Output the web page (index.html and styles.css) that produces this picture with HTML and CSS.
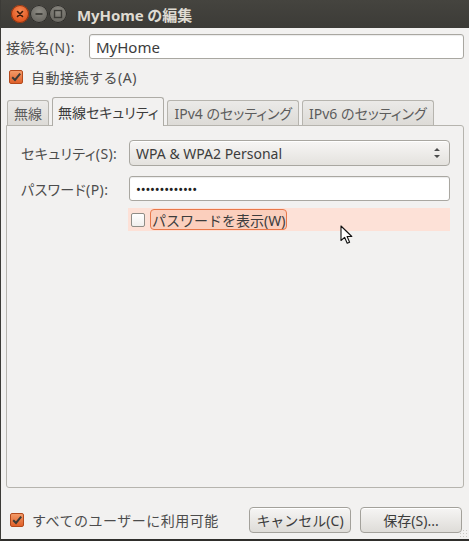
FILE: index.html
```html
<!DOCTYPE html>
<html lang="ja">
<head>
<meta charset="utf-8">
<title>MyHome の編集</title>
<link rel="stylesheet" href="styles.css">
</head>
<body>
<div class="window">
  <div class="titlebar">
    <div class="wm-buttons">
      <span class="wm-btn wm-close">
        <svg viewBox="0 0 18 18" width="18" height="18"><path d="M6.5 6.5 L11.5 11.5 M11.5 6.5 L6.5 11.5" stroke="#3a1a0a" stroke-width="1.6" stroke-linecap="round"/></svg>
      </span>
      <span class="wm-btn wm-min">
        <svg viewBox="0 0 18 18" width="18" height="18"><path d="M5.5 9 H12.5" stroke="#3b3a36" stroke-width="1.8"/></svg>
      </span>
      <span class="wm-btn wm-max">
        <svg viewBox="0 0 18 18" width="18" height="18"><rect x="5.5" y="5.5" width="7" height="7" fill="none" stroke="#3b3a36" stroke-width="1.4"/></svg>
      </span>
    </div>
    <div class="title">MyHome の編集</div>
  </div>

  <div class="content">
    <div class="row name-row">
      <label class="name-label">接続名(N):</label>
      <div class="entry name-entry">MyHome</div>
    </div>

    <div class="check-row auto-row">
      <span class="check checked">
        <svg viewBox="0 0 14 14" width="14" height="14"><path d="M3.2 7.2 L6 10 L11.2 3.6" fill="none" stroke="#3c3b37" stroke-width="2"/></svg>
      </span>
      <span class="check-text">自動接続する(A)</span>
    </div>

    <div class="tabs">
      <div class="tab">無線</div>
      <div class="tab active">無線セキュリティ</div>
      <div class="tab">IPv4 のセッティング</div>
      <div class="tab">IPv6 のセッティング</div>
    </div>

    <div class="panel">
      <div class="form-row">
        <span class="form-label">セキュリティ(S):</span>
        <div class="combo">
          <span>WPA &amp; WPA2 Personal</span>
          <svg class="combo-arrows" viewBox="0 0 8 14" width="8" height="14"><path d="M1 5 L4 2 L7 5 Z M1 9 L4 12 L7 9 Z" fill="#4c4c4c"/></svg>
        </div>
      </div>
      <div class="form-row pw-row">
        <span class="form-label">パスワード(P):</span>
        <div class="entry pw-entry">•••••••••••••</div>
      </div>
      <div class="show-row">
        <span class="check"></span>
        <span class="focus-label">パスワードを表示(W)</span>
      </div>
    </div>

    <div class="footer">
      <div class="check-row all-row">
        <span class="check checked">
          <svg viewBox="0 0 14 14" width="14" height="14"><path d="M3.2 7.2 L6 10 L11.2 3.6" fill="none" stroke="#3c3b37" stroke-width="2"/></svg>
        </span>
        <span class="check-text">すべてのユーザーに利用可能</span>
      </div>
      <div class="buttons">
        <button class="btn">キャンセル(C)</button>
        <button class="btn">保存(S)...</button>
      </div>
    </div>
  </div>

  <svg class="pointer" viewBox="0 0 13 20" width="13" height="20">
    <path d="M1 1 L1 15.5 L4.6 12.3 L7.2 18.3 L9.6 17.3 L7.1 11.5 L11.8 11.5 Z" fill="#fff" stroke="#111" stroke-width="1.1" stroke-linejoin="round"/>
  </svg>
  <div class="grip"></div>
</div>
</body>
</html>
```

FILE: styles.css
```css
* { box-sizing: border-box; }

html, body {
  margin: 0;
  padding: 0;
  background: #3c3b37;
}

body {
  font-family: "Noto Sans", "Noto Sans CJK JP", sans-serif;
  font-size: 14px;
  color: #3c3c3c;
}

.window {
  position: relative;
  width: 469px;
  height: 541px;
  background: #f2f1f0;
  border-left: 1px solid #3c3b37;
  border-bottom: 2px solid #2f2e2b;
  display: flex;
  flex-direction: column;
  overflow: hidden;
}

/* title bar */
.titlebar {
  height: 28px;
  flex: none;
  background: linear-gradient(#45443f, #3c3b37);
  display: flex;
  align-items: center;
}

.wm-buttons {
  display: flex;
  gap: 1px;
  margin-left: 10px;
}

.wm-btn {
  width: 18px;
  height: 18px;
  border-radius: 50%;
  display: block;
}
.wm-btn svg { display: block; }

.wm-close {
  background: radial-gradient(circle at 50% 35%, #f58a55, #e0561f 70%);
  box-shadow: inset 0 0 0 1px #8a3412;
}
.wm-min, .wm-max {
  background: radial-gradient(circle at 50% 35%, #8d8b84, #6a6862 70%);
  box-shadow: inset 0 0 0 1px #2c2b28;
}

.title {
  margin-left: 10px;
  color: #dfdbd2;
  font-weight: bold;
  font-size: 15px;
  letter-spacing: -0.1px;
}

/* dialog body */
.content {
  flex: 1;
  display: flex;
  flex-direction: column;
  padding: 6px 5px 0 5px;
}

.row {
  display: flex;
  align-items: center;
}

.name-label {
  width: 83px;
  flex: none;
  color: #4c4c4c;
  letter-spacing: 0.6px;
}

.entry {
  background: #fff;
  border: 1px solid #a9a7a1;
  border-radius: 3px;
  box-shadow: inset 0 1px 1px rgba(0,0,0,0.08);
  height: 25px;
  display: flex;
  align-items: center;
  padding-left: 6px;
  color: #3c3c3c;
}

.name-entry {
  flex: 1;
  font-size: 15px;
}

.check-row {
  display: flex;
  align-items: center;
}

.check {
  width: 14px;
  height: 14px;
  flex: none;
  border-radius: 2px;
  border: 1px solid #9d9b95;
  background: linear-gradient(#ffffff, #f0efed);
  position: relative;
}
.check.checked {
  border-color: #b44a1c;
  background: linear-gradient(#f39a67, #e0602a);
}
.check svg {
  position: absolute;
  left: -1px;
  top: -1px;
}

.check-text {
  margin-left: 8px;
  color: #4c4c4c;
  letter-spacing: 0.5px;
}

.auto-row {
  margin-top: 11px;
  padding-left: 3px;
  height: 14px;
}

/* notebook tabs */
.tabs {
  display: flex;
  align-items: flex-end;
  gap: 3px;
  margin-top: 13px;
  padding-left: 1px;
  height: 28px;
  position: relative;
  z-index: 1;
}

.tab {
  height: 25px;
  padding: 0 6px;
  display: flex;
  align-items: center;
  color: #5c5c5c;
  border: 1px solid #b6b4ae;
  border-bottom: none;
  border-radius: 3px 3px 0 0;
  background: linear-gradient(#ebeae8, #dddbd7);
  white-space: nowrap;
  font-feature-settings: "palt";
}

.tab.active {
  height: 29px;
  margin-bottom: -1px;
  background: #f2f1f0;
  color: #3c3c3c;
  padding: 0 5px;
  border-color: #aeaca6;
}

.panel {
  height: 363px;
  width: 458px;
  border: 1px solid #b6b4ae;
  border-radius: 0 3px 3px 3px;
  background: #f2f1f0;
  padding: 14px 13px 0 14px;
  display: flex;
  flex-direction: column;
}

.form-row {
  display: flex;
  align-items: center;
}

.form-label {
  width: 108px;
  flex: none;
  color: #4c4c4c;
  letter-spacing: 0.4px;
  font-feature-settings: "palt";
}

.combo {
  flex: 1;
  height: 26px;
  border: 1px solid #a9a7a1;
  border-radius: 4px;
  background: linear-gradient(#f7f6f5, #e4e2de);
  box-shadow: inset 0 1px 0 #fff;
  display: flex;
  align-items: center;
  justify-content: space-between;
  padding: 0 8px 0 6px;
  color: #3c3c3c;
}
.combo-arrows { display: block; }

.pw-row { margin-top: 10px; }

.pw-entry {
  flex: 1;
  height: 25px;
  font-size: 13px;
  letter-spacing: -0.2px;
  color: #222;
}

.show-row {
  margin-top: 7px;
  margin-left: 107px;
  width: 322px;
  height: 23px;
  background: #fde1d7;
  display: flex;
  align-items: center;
  padding-left: 3px;
}

.show-row .check {
  border-color: #8f8d87;
}

.focus-label {
  margin-left: 5px;
  height: 21px;
  display: flex;
  align-items: center;
  padding: 0 1px;
  border: 1px solid #e8784a;
  border-radius: 4px;
  background: #fbcfbd;
  color: #3c3c3c;
}

/* bottom action row */
.footer {
  display: flex;
  align-items: center;
  justify-content: space-between;
  margin-top: 19px;
  height: 26px;
}

.all-row { padding-left: 4px; }

.buttons {
  display: flex;
  gap: 9px;
  margin-right: 2px;
}

.btn {
  width: 102px;
  height: 26px;
  font: inherit;
  color: #3c3c3c;
  border: 1px solid #a3a19b;
  border-radius: 4px;
  background: linear-gradient(#f6f5f4, #dedcd8);
  box-shadow: inset 0 1px 0 #fff;
  padding: 0;
}

/* mouse pointer over the dialog */
.pointer {
  position: absolute;
  left: 339px;
  top: 225px;
}

/* resize grip in the corner */
.grip {
  position: absolute;
  right: 0;
  bottom: 0;
  width: 10px;
  height: 10px;
  background-image: radial-gradient(circle, #c9c7c2 0.8px, transparent 1px);
  background-size: 3px 3px;
}
```
